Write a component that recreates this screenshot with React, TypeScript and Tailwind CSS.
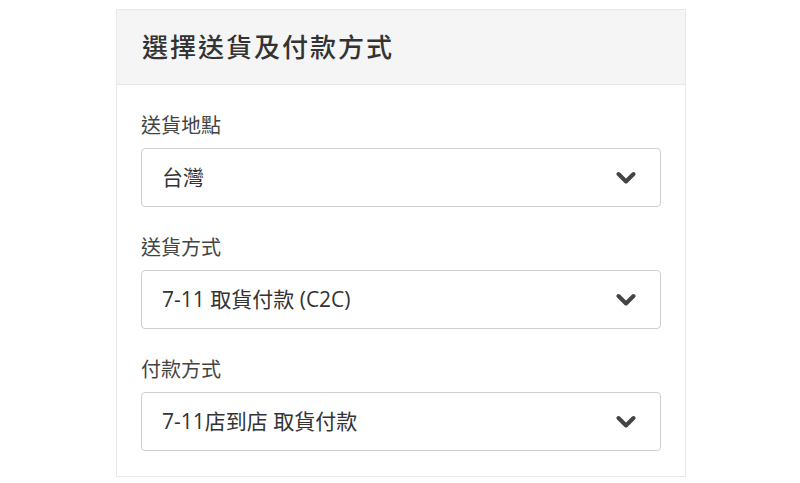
import React from 'react';

const font = { fontFamily: '"Open Sans", "Noto Sans CJK TC", sans-serif' };

function Chevron() {
  return (
    <svg width="20" height="14" viewBox="0 0 20 14" className="text-[#444]">
      <polyline points="2.5,3 10,10.5 17.5,3" fill="none" stroke="currentColor" strokeWidth="4" strokeLinecap="round" strokeLinejoin="round" />
    </svg>
  );
}

function Field({ label, value }: { label: string; value: string }) {
  return (
    <div className="flex flex-col gap-[8px]">
      <div className="text-[20px] leading-[28px] text-[#444]">{label}</div>
      <div className="h-[59px] rounded-[4px] border border-[#cfcfcf] bg-white flex items-center justify-between pl-5 pr-6">
        <span className="text-[21px] text-[#333]">{value}</span>
        <Chevron />
      </div>
    </div>
  );
}

export default function App() {
  return (
    <div className="w-[800px] h-[483px] bg-white pt-[9px]" style={font}>
      <div className="ml-[116px] w-[570px] border border-[#e8e8e8]">
        <div className="h-[75px] bg-[#f5f5f5] border-b border-[#e8e8e8] flex items-center px-[25px]">
          <h1 className="text-[26px] font-medium text-[#333] tracking-[2px]">選擇送貨及付款方式</h1>
        </div>
        <div className="px-[24px] pt-[27px] pb-[25px] flex flex-col gap-[27px]">
          <Field label="送貨地點" value="台灣" />
          <Field label="送貨方式" value="7-11 取貨付款 (C2C)" />
          <Field label="付款方式" value="7-11店到店 取貨付款" />
        </div>
      </div>
    </div>
  );
}
